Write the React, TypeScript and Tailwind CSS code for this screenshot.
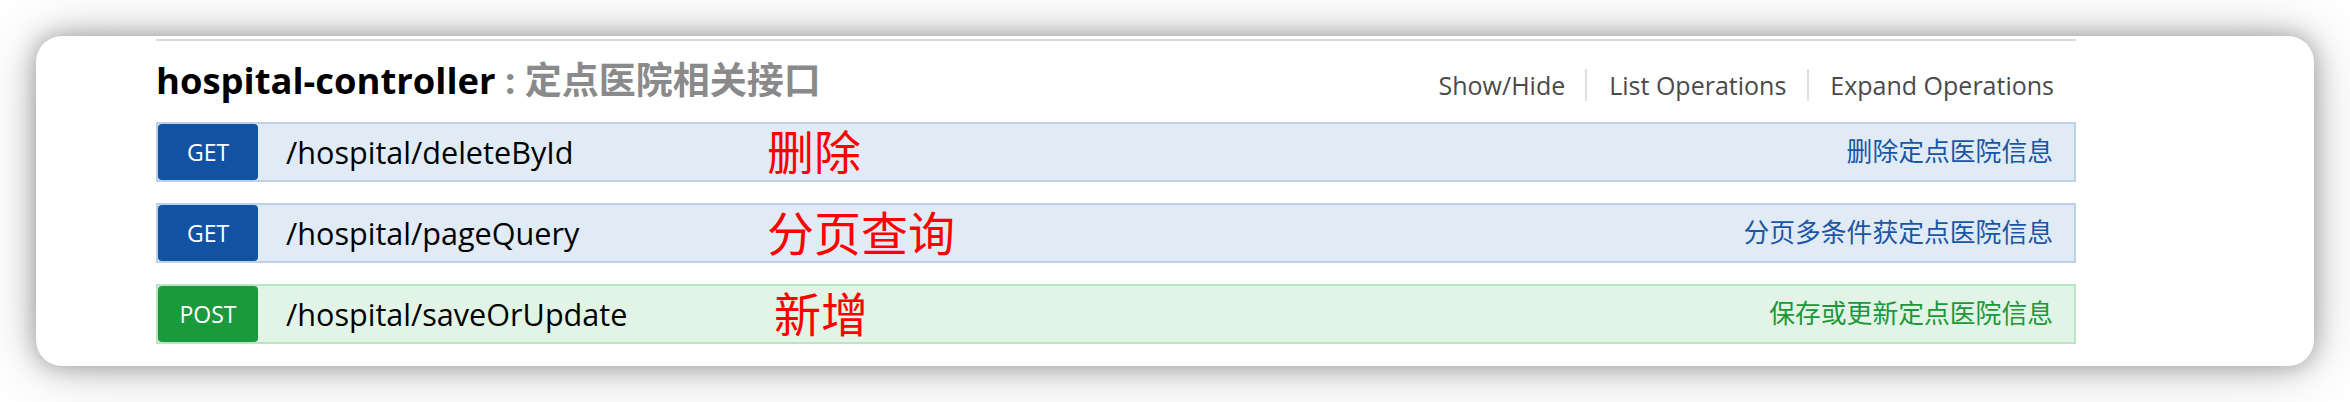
const FONT = { fontFamily: '"Open Sans", "Noto Sans CJK SC", sans-serif' };

type Op = {
  method: 'GET' | 'POST';
  path: string;
  note: string;
  noteOffset: string;
  summary: string;
};

const ops: Op[] = [
  { method: 'GET', path: '/hospital/deleteById', note: '删除', noteOffset: 'ml-0', summary: '删除定点医院信息' },
  { method: 'GET', path: '/hospital/pageQuery', note: '分页查询', noteOffset: 'ml-0', summary: '分页多条件获定点医院信息' },
  { method: 'POST', path: '/hospital/saveOrUpdate', note: '新增', noteOffset: 'ml-[7px]', summary: '保存或更新定点医院信息' },
];

function OperationRow({ op }: { op: Op }) {
  const isGet = op.method === 'GET';
  return (
    <div
      className={`flex items-center h-[60px] border-2 ${
        isGet ? 'bg-[#e1ebf5] border-[#bcd1e7]' : 'bg-[#e2f4e6] border-[#bbe3c7]'
      }`}
    >
      {/* method badge */}
      <span
        className={`flex items-center justify-center w-[100px] h-full rounded-[4px] text-white text-[23px] ${
          isGet ? 'bg-[#1152a2]' : 'bg-[#1b9a3b]'
        }`}
      >
        {op.method}
      </span>
      <span className="ml-[28px] w-[481px] text-[30.6px] text-black leading-none">{op.path}</span>
      {/* annotation */}
      <span className={`${op.noteOffset} text-[47px] text-[#ff0000] leading-none`}>{op.note}</span>
      <span
        className={`ml-auto pr-[21px] text-[25.8px] leading-none ${
          isGet ? 'text-[#1a56a6]' : 'text-[#1c973a]'
        }`}
      >
        {op.summary}
      </span>
    </div>
  );
}

export default function App() {
  return (
    <div className="w-[2350px] h-[402px] bg-white p-[36px]" style={FONT}>
      <div className="w-full h-full bg-white rounded-[26px] shadow-[0_0_24px_rgba(0,0,0,0.34),0_2px_64px_rgba(0,0,0,0.2)] pl-[120px] pt-[3px]">
        <div className="w-[1920px] border-t-2 border-[#d9d9d9]">
          {/* heading */}
          <div className="flex items-center justify-between h-[81px]">
            <h2 className="text-[36.4px] font-bold text-black leading-[36px] mb-[4px]">
              hospital-controller
              <span className="text-[#8a8a8a]"> : <span className="text-[37px]">定点医院相关接口</span></span>
            </h2>
            <ul className="flex items-center text-[25px] text-[#4a4a4a] leading-[32px] mt-[6px]">
              <li className="pr-[20px]">Show/Hide</li>
              <li className="pl-[22px] pr-[21px] border-l-2 border-[#e0e0e0]">List Operations</li>
              <li className="pl-[21px] pr-[22px] border-l-2 border-[#e0e0e0]">Expand Operations</li>
            </ul>
          </div>
          {/* operations */}
          <div className="flex flex-col gap-[21px]">
            {ops.map((op) => (
              <OperationRow key={op.path} op={op} />
            ))}
          </div>
        </div>
      </div>
    </div>
  );
}
